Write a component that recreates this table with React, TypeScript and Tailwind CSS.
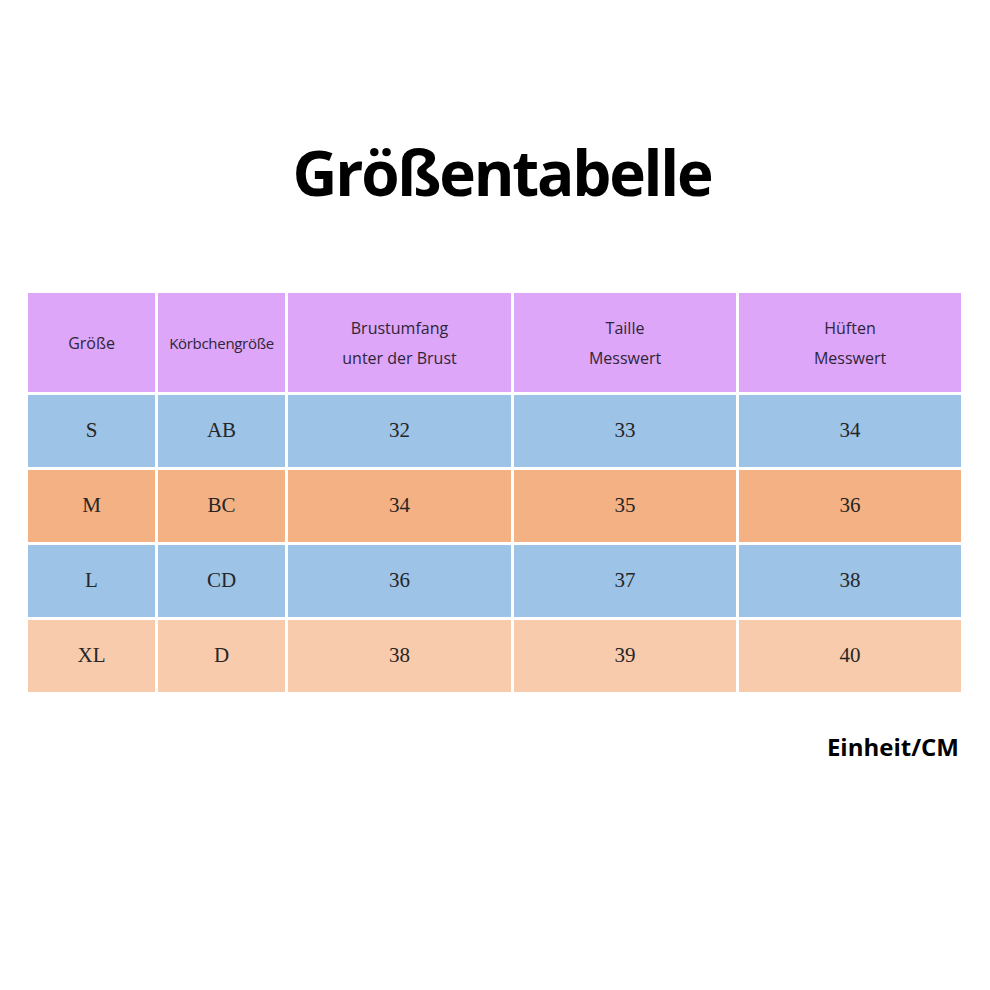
const header = [
  { lines: ['Größe'], small: false },
  { lines: ['Körbchengröße'], small: true },
  { lines: ['Brustumfang', 'unter der Brust'], small: false },
  { lines: ['Taille', 'Messwert'], small: false },
  { lines: ['Hüften', 'Messwert'], small: false },
];

const rows = [
  { bg: 'bg-[#9dc3e6]', cells: ['S', 'AB', '32', '33', '34'] },
  { bg: 'bg-[#f4b183]', cells: ['M', 'BC', '34', '35', '36'] },
  { bg: 'bg-[#9dc3e6]', cells: ['L', 'CD', '36', '37', '38'] },
  { bg: 'bg-[#f8cbad]', cells: ['XL', 'D', '38', '39', '40'] },
];

export default function App() {
  return (
    <div className="w-[990px] h-[990px] bg-white font-['Open_Sans',sans-serif]">
      <h1 className="pt-[141px] pl-[14px] text-center text-[62px] leading-none font-bold tracking-[-2.2px] text-black">
        Größentabelle
      </h1>

      <div className="mt-[90px] ml-[28px] grid grid-cols-[127px_127px_223px_222px_222px] grid-rows-[99px_72px_72px_72px_72px] gap-[3px]">
        {header.map((h, i) => (
          <div
            key={i}
            className={`bg-[#dda6f8] flex flex-col items-center justify-center text-[#2f2538] leading-[30px] ${
              h.small ? 'text-[15px] tracking-[-0.3px]' : 'text-[16px]'
            }`}
          >
            {h.lines.map((l) => (
              <span key={l}>{l}</span>
            ))}
          </div>
        ))}
        {rows.map((r) =>
          r.cells.map((c, j) => (
            <div
              key={r.cells[0] + j}
              className={`${r.bg} flex items-center justify-center font-['Liberation_Serif',serif] text-[21px] text-[#262626]`}
            >
              {c}
            </div>
          ))
        )}
      </div>

      <p className="mt-[43px] pr-[31px] text-right text-[24px] leading-none font-bold text-black">
        Einheit/CM
      </p>
    </div>
  );
}
